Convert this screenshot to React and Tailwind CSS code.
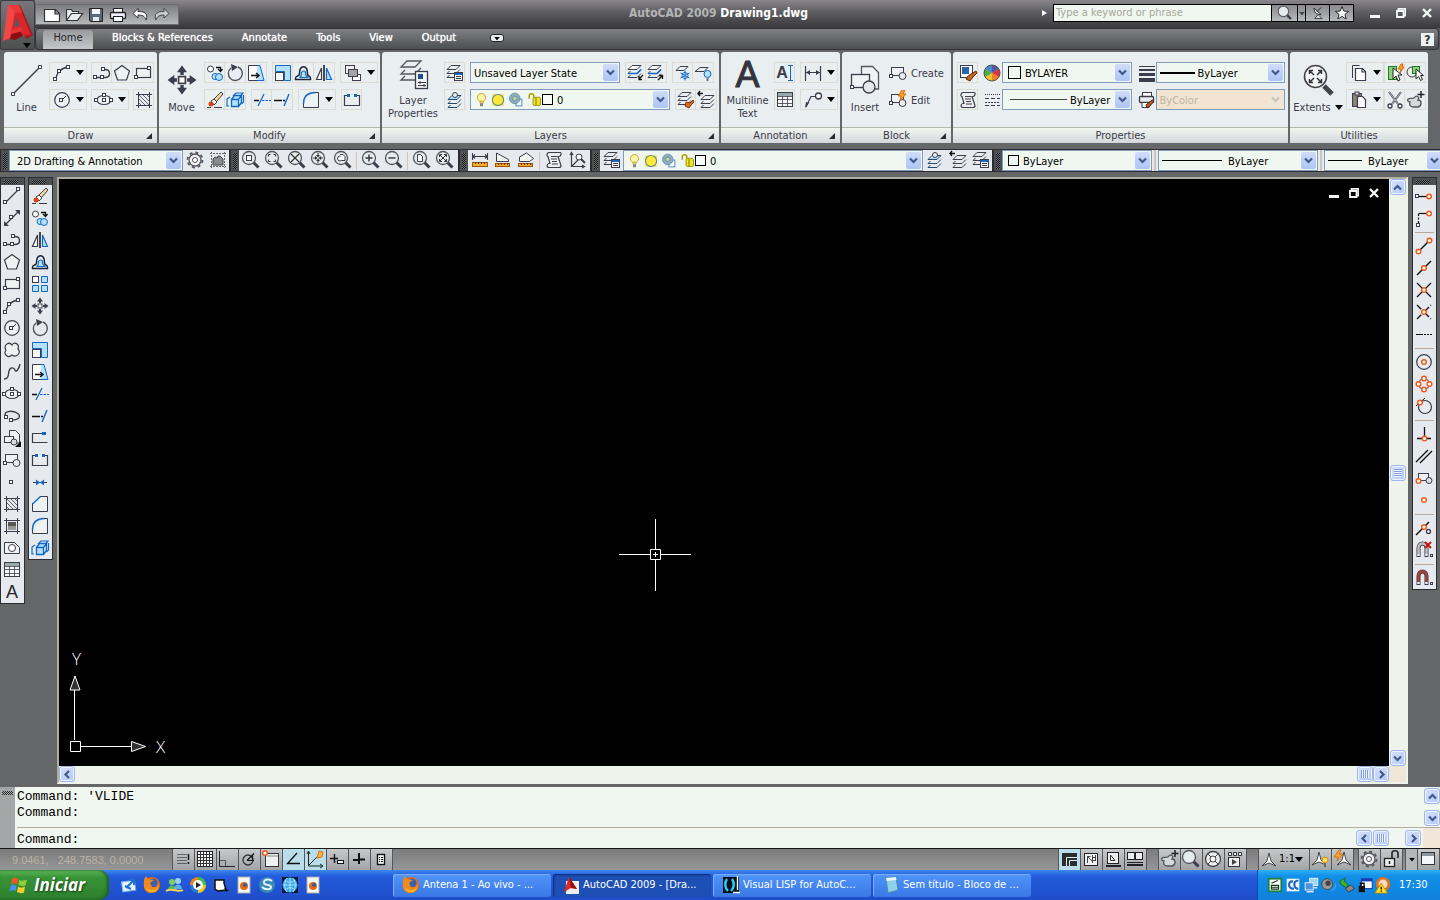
import React from "react";

const D = "#3c3c4a";
const B = "#1268c4";
const L = "#b4e0fa";
const OR = "#f05a1e";

const P = ({ d, c = D, f = "none", w = 1, ...r }) => (
  <path d={d} stroke={c} fill={f} strokeWidth={w} {...r} />
);
const N = ({ x, y }) => <rect x={x - 0.5} y={y - 0.5} width="3" height="3" fill="#fff" stroke={D} />;
const O = ({ x, y }) => <circle cx={x} cy={y} r="2.300" fill="#fff" stroke={OR} strokeWidth="1.5" />;
const Lens = ({ children }) => (
  <>
    <P d="M12 12l5.500 5.500" w={3} />
    <circle cx="8" cy="8" r="6.500" fill="#e4ecee" stroke="#55555f" strokeWidth="1.3" />
    {children}
  </>
);
const Stack = ({ x = 0, y = 0, top = "none", c = D }) => (
  <g transform={`translate(${x} ${y})`}>
    <P d="M6 2.500h9l-4 4H2z" c={c} f={top} />
    <P d="M4.500 8l-2.500 2.500h9l4-4" c={c} />
    <P d="M4.500 12l-2.500 2.500h9l4-4" c={c} />
  </g>
);
const Tripod = ({ x = 0 }) => (
  <P d={`M${x + 10} 3l2 8 5 5-7-3-7 3 5-5z`} f="#fff" c="#444" />
);
const Magnet = ({ c }) => (
  <>
    <P d="M4.500 17V8c0-6 8-6 8 0v9" c={D} w={4} />
    <P d="M4.500 14V8c0-6 8-6 8 0v6" c={c} w={2.5} />
    <P d="M4.500 14v2M12.500 14v2" c="#eee" w={2.5} />
    <rect x="16.500" y="14.500" width="2" height="2" fill="none" stroke={D} />
  </>
);
const Block = () => (
  <>
    <rect x="3.500" y="4.500" width="12" height="8" fill="#eef2f4" stroke={D} />
    <circle cx="14.500" cy="13" r="3.500" fill="#e8ecee" stroke={D} />
    <N x={2} y={12} />
  </>
);

const ICONS = {
  line: <><P d="M4 16L17 3" w={1.3} /><N x={2} y={15} /><N x={15} y={2} /></>,
  xline: <><P d="M3 17L17 3" w={1.2} /><path d="M2 18v-5l5 5zM18 2v5l-5-5z" fill={D} /><N x={8} y={8} /></>,
  pline: <><P d="M4 14.500h9c6 0 6-8 0-8" w={1.4} /><N x={2} y={13} /><N x={9} y={13} /><N x={10} y={5} /></>,
  polygon: <P d="M10 2.500l7.500 5.500-3 9h-9l-3-9z" f="#edf2f2" w={1.2} />,
  rect: <><rect x="3.500" y="5.500" width="14" height="9" fill="#edf2f2" stroke={D} strokeWidth="1.200" /><N x={2} y={13} /><N x={15} y={4} /></>,
  arc: <><P d="M4 17C4 10 9 5 16 4" w={1.3} /><N x={2} y={15} /><N x={6} y={7} /><N x={15} y={3} /></>,
  circle: <><circle cx="10" cy="10" r="7.300" fill="#edf2f2" stroke={D} strokeWidth="1.200" /><P d="M10 10l4-4" /><N x={8} y={9} /></>,
  revcloud: <P d="M10 5c2-4 8-1 6 4 4 4-2 9-6 6-4 4-9-1-6-5-3-5 3-9 6-5z" f="#edf2f2" w={1.2} />,
  spline: <P d="M2 17c5 0 4-4 5-8s5-4 6-1 4-1 5-6" w={1.4} />,
  ellipse: <><ellipse cx="10" cy="10" rx="7" ry="4.500" fill="#edf2f2" stroke={D} strokeWidth="1.200" /><N x={1} y={9} /><N x={9} y={9} /><N x={16} y={9} /><N x={9} y={4} /></>,
  ellipsearc: <><P d="M4 11C0 5 10 4 15 7s2 7-5 7" w={1.4} /><N x={3} y={10} /><N x={8} y={13} /></>,
  insert: <><P d="M7.500 9V2.500h6l4 4V15h-6" f="#eef2f4" /><rect x="2.500" y="8.500" width="9" height="6" fill="#eef2f4" stroke={D} /><circle cx="12" cy="14" r="3" fill="#ddd" stroke={D} /><path d="M19 13v6h-6z" fill="#111" /></>,
  block: <Block />,
  point: <N x={8} y={9} />,
  hatch: <><P d="M2 4.500h16M2 15.500h16M4.500 2v16M15.500 2v16" /><P d="M5 5l10 10M5 9l6 6M9 5l6 6M5 13l2 2M13 5l2 2" w={0.8} /></>,
  gradient: <><P d="M2 4.500h16M2 15.500h16M4.500 2v16M15.500 2v16" /><rect x="6" y="6" width="8" height="8" fill="#999" /><rect x="6" y="6" width="8" height="4" fill="#555" /></>,
  region: <><P d="M2.500 15.500v-11h10l5 5v6z" f="#edf2f2" /><circle cx="10" cy="10" r="3.500" fill="#fff" stroke={D} /></>,
  table: <><rect x="2.500" y="2.500" width="15" height="14" fill="#f6f8f8" stroke={D} /><rect x="3" y="3" width="14" height="3" fill="#9aa" /><P d="M3 6.500h14M3 9.500h14M3 13.500h14M7.500 6v10M12.500 6v10" w={0.8} /></>,
  erase: <><path d="M9 9l7-7 2 2-7 8z" fill="#fbd79a" stroke={D} /><path d="M6 11l3-2 3 3-3 3z" fill="#fff" stroke={D} /><circle cx="6" cy="14" r="2.500" fill="#d84315" /><P d="M2 17.500h4M9 17.500h8" /></>,
  copy: <><circle cx="5.500" cy="6" r="3" fill="#fff" stroke={D} /><circle cx="10" cy="13.500" r="3" fill={L} stroke={B} /><circle cx="14" cy="14" r="3.500" fill={L} stroke={B} /><P d="M11 4.500h4.500v4M13 6l2.500 2.500 2-2.500" w={1.3} c="#111" /></>,
  mirror: <><P d="M7.500 5v11.500h-5z" f="#fff" w={1.2} /><P d="M12.500 5v11.500h5z" c={B} f={L} w={1.2} /><P d="M10 2v16" w={1.5} c="#111" /></>,
  offset: <><P d="M2.500 15.500c0-4 4-1 4-5 0-9 8-9 8 0 0 4 3 1 3 5v1h-15z" c="#16243c" w={1.5} /><P d="M6.500 14.500c3-1 1-3 2-5s4-2 4 0 0 4 3 5z" c={B} f={L} w={1.2} /></>,
  array: <><rect x="2.500" y="2.500" width="6" height="6" fill="#fff" stroke={D} /><P d="M11.500 2.500h6v6h-6zM11.500 11.500h6v6h-6zM2.500 11.500h6v6h-6z" c={B} f={L} /></>,
  move: <><rect x="8" y="8" width="4" height="4" fill="#fff" stroke={D} /><path d="M10 1.500l3 4h-2V7H9V5.500H7zM10 18.500l3-4h-2V13H9v1.500H7zM1.500 10l4-3v2H7v2H5.500v2zM18.500 10l-4-3v2H13v2h1.500v2z" fill={D} /></>,
  rotate: <><P d="M6 5a7 7 0 1 0 7-1" w={1.4} c="#55555f" /><path d="M6 1l7 3-6 4z" fill={D} /></>,
  scale: <><P d="M2.500 2.500h15v15h-6v-9h-9z" c={B} f={L} /><rect x="2.500" y="9.500" width="8" height="8" fill="#f8fafa" stroke={D} /></>,
  stretch: <><P d="M11 2.500H2.500v15H11" f="#fff" /><P d="M11 2.500h3l4 15h-7" c={B} f={L} /><P d="M5 12.500h7M10 10l3 2.500-3 2.500" w={1.4} c="#111" /></>,
  trim: <><P d="M2 10.500h5" w={1.5} c="#111" /><P d="M6 16l6-12" c={B} w={1.3} /><P d="M10 10.500h9" c={B} strokeDasharray="2.500 1" w={1.2} /></>,
  extend: <><P d="M2 10.500h6" w={1.5} c="#111" /><P d="M8 10.500h5" c="#111" strokeDasharray="2 1" w={1.3} /><P d="M12 16l5-12" c={B} w={1.4} /></>,
  breakpt: <><P d="M12 5.500H2.500v9h15" w={1.2} /><rect x="12" y="4" width="4" height="3" fill={B} /></>,
  break: <><P d="M5 5.500H2.500v10h15v-10H15" w={1.2} /><rect x="5" y="4" width="3" height="3" fill={B} /><rect x="12" y="4" width="3" height="3" fill={B} /></>,
  join: <><P d="M3 10.500h14" /><path d="M6 7.500l4 3-4 3zM14 7.500l-4 3 4 3z" fill={B} /></>,
  chamfer: <><P d="M2.500 9v8.500h15v-15H10" f="#edf2f2" /><P d="M2.500 10l8-7.500" c={B} w={1.4} /></>,
  fillet: <><P d="M2.500 13v4.500h15v-15H14" f="#edf2f2" /><P d="M2.500 14c0-7 4-11.500 12-11.500" c={B} w={1.4} /></>,
  explode: <><P d="M6.500 9.500h7v7h-7zM6.500 9.500l3-4h7l-3 4M16.500 5.500v7l-3 4" c={B} f={L} w={1.3} /><P d="M5 7l-3 2v7h2M8 6l3-3h7l-2 2M18.500 5v7l-2 2" c={B} f="none" w={1.2} /></>,
  draworder: <><rect x="2.500" y="2.500" width="9" height="8" fill="#eee" stroke={D} /><rect x="9.500" y="11.500" width="8" height="6" fill="#fff" stroke={D} /><rect x="5.500" y="6.500" width="9" height="7" fill="#a2a4a8" stroke={D} /></>,
  layerlist: <><Stack /><rect x="9.500" y="9.500" width="8" height="8" fill="#fff" stroke={D} /><P d="M10 11h7" c={B} w={2} /><P d="M11 13.500h5M11 15.500h5" /></>,
  layercur: <><Stack y={3} x={1} top={L} c="#23466e" /><circle cx="10" cy="5" r="2.500" fill="#eee" stroke={D} /></>,
  layerin: <><Stack top="#fff" /><P d="M2 10.500h9l4-4" c={B} w={1.6} /><P d="M17 12l-4 4M13 13v3.500h3" w={1.3} c="#111" /></>,
  layerout: <><Stack top="#fff" /><P d="M2 10.500h9l4-4" c={B} w={1.6} /><P d="M12 17l4-4M13 12.500h3.500V16" w={1.3} c="#111" /></>,
  layerfreeze: <><P d="M7 3.500h8l-4 4H3z" /><circle cx="12" cy="12.500" r="3" fill="#fff" stroke={B} /><P d="M12 7.500v10M7.500 10l9 5M16.500 10l-9 5" c={B} /></>,
  layeroff: <><P d="M7 4.500h8l-4 4H2z" /><circle cx="14.500" cy="11" r="3.500" fill={L} stroke={B} /><P d="M14.500 15v3" w={2} c="#678" /></>,
  layermatch: <><Stack /><path d="M10 12l4 1 3-3 1 2-3 3-2 3-4-2z" fill="#d8691c" stroke="#7a3a10" /></>,
  layerprev: <><Stack x={3} y={3} /><P d="M7 3.500H2M4 1L2 3.500 4 6" w={1.4} c="#111" /></>,
  bulb: <><circle cx="10" cy="7.500" r="5.500" fill="#fff7a8" stroke="#c8a032" strokeWidth="1.300" /><path d="M8 12h4v3H8z" fill="#f4d860" stroke="#c8a032" /><rect x="8" y="15" width="4" height="4" fill="#888" /></>,
  sun: <><rect x="2" y="2" width="16" height="16" fill="#f5d83a" /><circle cx="10" cy="10" r="8" fill="#ffe838" stroke="#5a8a90" strokeWidth="1.500" /></>,
  freeze: <><rect x="10.500" y="9.500" width="8" height="9" fill="#f4fbf4" stroke="#5a8ac8" strokeWidth="1.300" /><circle cx="9" cy="8.500" r="7" fill="#8ab0bc" stroke="#5580b0" /><circle cx="9" cy="8.500" r="3" fill="#c8d890" stroke="#5580b0" /></>,
  lock: <><P d="M3 9V5c0-3.500 6-3.500 6 0v4" c="#a8a000" w={2} /><rect x="8" y="7" width="10" height="11" rx="2" fill="#f0e428" stroke="#857c00" /><P d="M12 7.500v10" c="#a8a000" w={2} /></>,
  dim: <><P d="M2.500 3v15M17.500 3v15M3 9.500h14" w={1.2} /><path d="M3 9.500l4-2.500v5zM17 9.500L13 7v5z" fill={D} /></>,
  leader: <><circle cx="15.500" cy="6" r="3" fill="#fff" stroke={D} strokeWidth="1.300" /><P d="M12 6.500H8L3 17" w={1.2} /><path d="M2 18l1-6 3 1z" fill={D} /></>,
  edit: <><Block /><path d="M14 0l-4 6h3l-1 5 6-7h-3l2-4z" fill="#f8a02c" stroke="#d86c10" /></>,
  match: <><rect x="2.500" y="2.500" width="12" height="12" fill="#fff" stroke={D} /><rect x="4" y="4" width="7" height="7" fill="#2a64ac" /><path d="M9 14l4-3 5-3 1 2-4 4-3 4-4-2z" fill="#c8641e" stroke="#5c2c0c" /></>,
  wheel: <><circle cx="10" cy="10" r="8" fill="#e8c030" /><path d="M10 10V2a8 8 0 0 1 7 4z" fill="#5a54a8" /><path d="M10 10V2a8 8 0 0 0-7 4z" fill="#488ad0" /><path d="M10 10l7-4a8 8 0 0 1 0 8z" fill="#d8344c" /><path d="M10 10L3 6a8 8 0 0 0 0 8z" fill="#4cae50" /><path d="M10 10l7 4a8 8 0 0 1-7 4z" fill="#f08028" /><circle cx="10" cy="10" r="8" fill="none" stroke="#555" /></>,
  list: <><P d="M5 2.500h11c2 0 1 4-1 4h-1l3 9c0 2-2 2-2 2H5c-3 0-2-4 0-4h1l-2-7c-2 0-1-4 1-4z" f="#eee" w={1.2} /><P d="M7 6.500h6M7 9h6M8 11.500h5M8 14h6" /></>,
  ltypes: <><P d="M3 4.500h15" strokeDasharray="1 1" /><P d="M3 8.500h15M3 15.500h15" strokeDasharray="4 2" /><P d="M3 12.500h15" strokeDasharray="2 1" /></>,
  lweights: <><P d="M3 3.500h16" /><P d="M3 7h16" w={2} /><P d="M3 11.500h16" w={3} /><P d="M3 17h16" w={4} /></>,
  plot: <><rect x="6.500" y="2.500" width="9" height="5" fill="#fff" stroke={D} /><rect x="3.500" y="6.500" width="14" height="6" rx="1" fill="#e8ecee" stroke={D} strokeWidth="1.300" /><P d="M6 12.500h8l-1 5H6z" f="#fff" /><path d="M10 15l6-5 2 1-4 5-3 2z" fill="#b85a22" stroke="#4c240c" /></>,
  copyclip: <><P d="M3.500 15V2.500h7" /><P d="M6.500 5.500h7l3 3v9h-10zM13 6v3h3" f="#fff" w={1.2} /></>,
  paste: <><rect x="3.500" y="3.500" width="9" height="13" fill="#8c8078" stroke={D} /><rect x="6" y="2" width="4" height="3" fill="#ddd" stroke={D} /><P d="M8.500 6.500h5l3 3v8h-8z" f="#fff" w={1.2} /></>,
  qselect: <><rect x="3.500" y="3.500" width="8" height="13" fill="#8fd07c" stroke="#1e7a1e" /><path d="M8 5v11l3-3 2 5 2-1-2-5h4z" fill="#fff" stroke="#222" /><path d="M16 1l-3 5h3l-1 4 4-6h-2l1-3z" fill="#f8a02c" stroke="#d86c10" /></>,
  select: <><circle cx="7" cy="9" r="5" fill="#eee" stroke={D} /><rect x="7.500" y="3.500" width="7" height="7" fill="#8fd07c" stroke="#1e7a1e" /><path d="M11 6v10l2.500-2.500 2 4 2-1-2-4h3z" fill="#fff" stroke="#222" /></>,
  cut: <><P d="M4 2l9 12M16 2L7 14" w={2} /><P d="M4 2l9 12M16 2L7 14" w={0.7} c="#eee" /><circle cx="5" cy="16" r="2" fill="#fff" stroke={D} strokeWidth="1.300" /><circle cx="15" cy="16" r="2" fill="#fff" stroke={D} strokeWidth="1.300" /></>,
  pan: <><P d="M3 9c3-2 5 1 7-2 2-2 5 0 3 3 4 0 4 6 0 7H8c-3 0-4-3-3-5-2 0-3-2-2-3z" f="#d4d8da" c="#555" w={1.3} /><P d="M16 1v7M12.500 4.500h7" w={1.5} c="#222" /></>,
  gear: <><circle cx="10" cy="10" r="6" fill="#f4f4f4" stroke="#55555f" strokeWidth="1.300" /><circle cx="10" cy="10" r="7.500" fill="none" stroke="#55555f" strokeWidth="1.800" strokeDasharray="3 2.900" /><circle cx="10" cy="10" r="2.500" fill="#fff" stroke="#55555f" /></>,
  custom: <><P d="M2 3.500h16M2 16.500h16M3.500 2v16M16.500 2v16" c="#666" strokeDasharray="2 1" /><path d="M5 15V9l2-2 2 1 1-2h2l3 3v6z" fill="#8a8a92" stroke="#444" /></>,
  zwin: <Lens><rect x="5.500" y="5.500" width="5" height="5" fill="#fff" stroke={D} /></Lens>,
  zdyn: <Lens><P d="M4.500 6.500v-2h2M9.500 4.500h2v2M11.500 9.500v2h-2M6.500 11.500h-2v-2" c="#333" /></Lens>,
  zscale: <Lens><P d="M4 4l8 8M12 4l-8 8" c="#333" w={1.2} /></Lens>,
  zcenter: <Lens><path d="M8 7.500L6 5h4zM8 8.500L6 11h4zM7.500 8L5 6v4zM8.500 8L11 6v4z" fill="#333" /><P d="M8 3v3M8 10v3M3 8h3M10 8h3" c="#333" /></Lens>,
  zobj: <Lens><circle cx="7" cy="8.500" r="2.500" fill="#fff" stroke={D} /><P d="M7 4.500h3l2 2v4h-3" f="#fff" /></Lens>,
  zin: <Lens><P d="M4.500 8h7M8 4.500v7" c="#333" w={1.4} /></Lens>,
  zout: <Lens><P d="M4.500 8h7" c="#333" w={1.4} /></Lens>,
  zall: <Lens><P d="M5.500 4.500h3l2 2v5h-5z" f="#fff" /></Lens>,
  zext: <Lens><P d="M5 5l6 6M11 5l-6 6M4.500 7V4.500H7M9 4.500h2.500V7M11.500 9v2.500H9M7 11.500H4.500V9" c="#333" /></Lens>,
  zplain: <Lens />,
  dist: <><P d="M2.500 3v7M17.500 3v7M3 6.500h14M5 4.500L3 6.500l2 2M15 4.500l2 2-2 2" w={1.1} /><rect x="2.500" y="12.500" width="15" height="4" fill="#f4ac28" stroke="#9c5406" /><P d="M5.500 12v2M8.500 12v2M11.500 12v2M14.500 12v2" c="#6a3400" /></>,
  area: <><P d="M3.500 11.500V3l12 6.500v2z" f="#f4f6f4" /><rect x="2.500" y="13.500" width="14" height="3" fill="#f4ac28" stroke="#9c5406" /><P d="M5.500 13v2M8.500 13v2M11.500 13v2M14.500 13v2" c="#6a3400" /></>,
  volume: <><P d="M3.500 11.500V7l7-4 7 5.500-4 3z" f="#f4f6f4" /><rect x="2.500" y="13.500" width="14" height="3" fill="#f4ac28" stroke="#9c5406" /><P d="M5.500 13v2M8.500 13v2M11.500 13v2M14.500 13v2" c="#6a3400" /></>,
  locate: <><P d="M4.500 3v13.500H17M3 5l1.500-2.500L6 5M15 15l2.500 1.500L15 18M5 16l6-6" w={1.2} /><circle cx="12" cy="7" r="3" fill="#fff" stroke={D} /><P d="M14 9l4 4" w={2} /></>,
  otrack: <><P d="M5 10.500h10" c="#111" w={1.3} /><N x={2} y={9} /><O x={15} y={10.500} /></>,
  ofrom: <><P d="M4.500 5.500H14" c="#111" w={1.2} /><P d="M4.500 6v9" c="#111" strokeDasharray="2 1.500" w={1.2} /><N x={3} y={16} /><O x={15} y={5.500} /></>,
  oend: <><P d="M5 15L15 5" w={1.4} c="#111" /><O x={4.500} y={15.500} /><O x={15.500} y={4.500} /></>,
  omid: <><P d="M3 17L17 3" w={1.4} c="#111" /><O x={10} y={10} /></>,
  oint: <><P d="M3 17L17 3M3 3l14 14" w={1.3} c="#111" /><O x={10} y={10} /></>,
  oapp: <><P d="M3 17L17 3M3 3l14 14" w={1.3} c="#111" strokeDasharray="6 2 1 2" /><O x={10} y={10} /></>,
  oext: <P d="M2 10.500h16" c="#111" w={1.2} strokeDasharray="7 1 2 1 2 1 2 1" />,
  ocen: <><circle cx="10" cy="10" r="7.300" fill="#e8ecee" stroke={D} strokeWidth="1.200" /><O x={10} y={10} /></>,
  oquad: <><circle cx="10" cy="10" r="5.500" fill="#e8ecee" stroke={D} /><O x={10} y={4.500} /><O x={10} y={15.500} /><O x={4.500} y={10} /><O x={15.500} y={10} /></>,
  otan: <><circle cx="11" cy="11" r="6.500" fill="#e8ecee" stroke={D} strokeWidth="1.200" /><P d="M2 10l9-8" c="#111" /><O x={6} y={6.500} /></>,
  operp: <><P d="M10.500 3v11M3 14.500h14" w={1.3} c="#111" /><O x={10.500} y={14.500} /></>,
  opar: <P d="M2 16L14 4M6 17L18 5" w={1.4} c="#111" />,
  oins: <><rect x="4.500" y="5.500" width="10" height="7" fill="#eef2f4" stroke={D} /><circle cx="15" cy="12.500" r="3" fill="#ddd" stroke={D} /><O x={4.500} y={13} /></>,
  onode: <O x={10} y={10} />,
  onear: <><P d="M2 17L15 4" w={1.4} c="#111" /><O x={10} y={9} /><circle cx="14.500" cy="13.500" r="2" fill="#fff" stroke={D} strokeWidth="1.300" /></>,
  onone: <><Magnet c="#c0c0c0" /><P d="M11 2l6 6M17 2l-6 6" c="#c81414" w={2} /></>,
  oset: <Magnet c="#a8403a" />,
  fnew: <P d="M2.500 4.500h11l4 4v8h-15zM13 5v4h4" f="#fff" c="#333" w={1.2} />,
  fopen: <P d="M2.500 15.500v-11h5l1 2h6v2M2.500 15.500l5-7h11l-5 7z" f="#e8ecee" c="#333" w={1.2} />,
  fsave: <><path d="M3.500 3.500h13v13h-12l-1-1z" fill="#5a6874" stroke="#222" /><rect x="6" y="4" width="8" height="5" fill="#f4f8fa" /><rect x="7" y="12" width="6" height="4" fill="#e8ecee" /></>,
  fprint: <><rect x="5.500" y="3.500" width="9" height="5" fill="#fff" stroke="#222" /><rect x="2.500" y="7.500" width="15" height="6" rx="1" fill="#eef" stroke="#222" strokeWidth="1.300" /><rect x="5.500" y="11.500" width="9" height="5" fill="#fff" stroke="#222" /></>,
  undo: <P d="M8 3.500L3 8.500l5 4.500v-3c4 0 7 1 8 5 3-6-2-9-8-8.500z" f="#fff" c="#333" />,
  redo: <P d="M12 3.500l5 5-5 4.500v-3c-4 0-7 1-8 5-3-6 2-9 8-8.500z" f="#c8cccc" c="#444" />,
  dish: <><P d="M5 4c0 5 3 8 9 8zM9 8l5-5" f="#eee" c="#222" w={1.2} /><P d="M10 12l-4 5h9z" f="#ddd" c="#222" /></>,
  star: <P d="M10 2l2.300 5.500 6 .5-4.600 3.800 1.500 5.700L10 14.300l-5.200 3.200 1.500-5.700L1.700 8l6-.5z" f="#f4f8f4" c="#222" w={1.2} />,
  snap: <><P d="M4.500 5.500h9M4.500 8.500h9M4.500 11.500h9M4.500 14.500h9" c="#111" strokeDasharray="1 1" /><P d="M15.500 5v6M15.500 13v2" c="#111" w={1.4} /></>,
  grid: <><rect x="2.500" y="2.500" width="15" height="15" fill="#fff" stroke="#222" /><P d="M5.500 3v14M8.500 3v14M11.500 3v14M14.500 3v14M3 5.500h14M3 8.500h14M3 11.500h14M3 14.500h14" c="#333" /></>,
  ortho: <><P d="M2.500 2v15.500H18" c="#222" /><P d="M3 11.500h5.500V17" c="#555" /></>,
  polar: <><circle cx="9" cy="11" r="5" fill="none" stroke="#333" strokeWidth="1.300" /><P d="M8 11.500h7M8 11.500l7-7M13.500 6v5" c="#111" w={1.2} /></>,
  osnap: <><rect x="4.500" y="4.500" width="13" height="13" fill="#f0f0f0" stroke="#333" /><P d="M6 7h11" c="#bbb" w={2} /><O x={4} y={4} /></>,
  otk: <P d="M14 4L4.500 14.500H17" c="#111" w={1.3} />,
  ducs: <><P d="M3.500 3v14H18M4 16L12 8M2 5l1.500-3L5 5M15 15l3 2-3 2" c="#222" /><path d="M14 2l-2 7 5-1 1-5z" fill="#f8b040" stroke="#e07010" /></>,
  dyn: <><P d="M3 9.500h8M7.500 5v9" c="#111" w={1.4} /><rect x="10.500" y="11.500" width="6" height="3" fill="#fff" stroke="#111" /></>,
  lwt: <><P d="M4 11h6" c="#111" w={2} /><P d="M10 10.500h6M10 4v11" c="#111" w={2} /></>,
  qp: <><rect x="6.500" y="5.500" width="7" height="10" fill="#fff" stroke="#111" strokeWidth="1.400" /><P d="M8 8.500h4M8 10.500h4M8 12.500h4" c="#111" strokeDasharray="1 1 2" /></>,
  model: <><rect x="3" y="4" width="15" height="13" fill="#2a2e30" /><P d="M7.500 17V8.500H18M10.500 17v-5.500H18" c="#dfeef4" /></>,
  layout: <><rect x="3.500" y="4.500" width="13" height="12" fill="#f0f0f0" stroke="#222" /><P d="M6 7l5 5M6.500 14V7.500h3M11.500 6v8M11 8.500h4M11 11.500h4M14.500 6v6" c="#444" /></>,
  lay2: <><rect x="4.500" y="3.500" width="11" height="11" fill="#eee" stroke="#222" /><P d="M7.500 6v5.500H12z" c="#333" /><P d="M3 17h15" c="#222" w={2} /></>,
  quick: <><rect x="2.500" y="3.500" width="7" height="7" fill="#eee" stroke="#222" /><rect x="10.500" y="3.500" width="7" height="7" fill="#eee" stroke="#222" /><P d="M2 13.500h16" c="#222" w={1} /><P d="M2 16h16" c="#222" w={2} /></>,
  swheel: <><circle cx="10" cy="10" r="7.500" fill="#eee" stroke="#444" strokeWidth="1.300" /><circle cx="10" cy="10" r="3" fill="#fff" stroke="#444" /><P d="M5 5l3 3M15 5l-3 3M5 15l3-3M15 15l-3-3" c="#444" /></>,
  motion: <><P d="M3.500 3.500h3v3h-3zM8.500 3.500h3v3h-3zM13.500 3.500h3v3h-3z" f="#eee" c="#333" /><rect x="3.500" y="8.500" width="11" height="9" fill="#eee" stroke="#333" /><path d="M7 10v6l5-3z" fill="#444" /></>,
  tripod: <Tripod />,
  annvis: <><Tripod x={-1} /><circle cx="15" cy="11" r="3" fill="#ffe060" stroke="#e08a10" /><P d="M15 14v4" w={2} c="#666" /></>,
  annauto: <><Tripod x={2} /><path d="M7 1L2 8h4l-1 4 6-7H7l2-4z" fill="#f8a830" stroke="#d86c10" /></>,
  unlock: <><rect x="3.500" y="9.500" width="10" height="8" fill="#eee" stroke="#222" strokeWidth="1.300" /><P d="M8.500 12v3" c="#222" w={1.5} /><P d="M11 9V4c0-3 6-3 6 0v5" c="#222" w={1.6} /></>,
  clean: <><rect x="3.500" y="3.500" width="13" height="12" fill="#f4f8f8" stroke="#333" /><rect x="4" y="4" width="12" height="3" fill="#8a98a0" /></>,
  desktop: <><rect x="3" y="6" width="13" height="10" fill="#e8f2fc" stroke="#7ab0e8" transform="rotate(-8 10 10)" /><P d="M7 13l7-7M10 5l5 0v5M12 14l-6-3" c="#1c70d0" w={2} /></>,
  firefox: <><circle cx="10" cy="10" r="8" fill="#e86a10" /><circle cx="11" cy="8" r="4.500" fill="#3a60b0" /><path d="M2 7c0-3 1-5 2-6l2 3 6 1-4 3 2 4c4 1 6-1 7-4 1 6-3 10-8 10S1 14 2 7z" fill="#f48a1c" /><path d="M4 12c3 5 9 4 12 1-2 5-10 6-12-1z" fill="#fcc828" /></>,
  msn: <><circle cx="7" cy="7" r="3" fill="#7cd060" /><path d="M3 15c0-6 8-6 8 0z" fill="#58b848" /><circle cx="13" cy="6" r="3" fill="#9ad4f4" /><path d="M9 14c0-6 8-6 8 0z" fill="#5cb0e4" /><P d="M1 16c6-4 12 2 17-1" c="#f4d060" w={2} /></>,
  wmp: <><circle cx="10" cy="10" r="8" fill="#2878d8" /><path d="M10 10V2a8 8 0 0 1 8 8z" fill="#48b848" /><path d="M10 10H2a8 8 0 0 1 8-8z" fill="#f08020" /><path d="M10 10h8a8 8 0 0 1-8 8z" fill="#f4c820" /><circle cx="10" cy="10" r="5" fill="#f4f8fc" /><path d="M8 7v6l5-3z" fill="#222" /></>,
  dark: <><path d="M4 5h9v3l2 7-8 1-3-2z" fill="#fff" stroke="#111" strokeWidth="1.500" /><path d="M13 13l5 2-3 2z" fill="#111" /></>,
  htmldoc: <><rect x="4" y="2" width="12" height="16" fill="#f8f8f8" stroke="#aaa" /><circle cx="10" cy="11" r="4" fill="#e86a10" /><circle cx="11" cy="10" r="2" fill="#3858a8" /></>,
  sball: <><circle cx="10" cy="10" r="8" fill="#3888b8" /><P d="M15 6c-4-3-9-1-8 2s7 1 7 4-6 3-9 0" c="#e4f4fc" w={2} /></>,
  globe: <><rect x="2" y="2" width="16" height="16" fill="#0a1840" /><circle cx="10" cy="10" r="7.500" fill="#38a8e8" /><P d="M3 10h14M10 3v14M5 5c3 3 7 3 10 0M5 15c3-3 7-3 10 0M7 3c-3 4-3 10 0 14M13 3c3 4 3 10 0 14" c="#c8f0fc" w={0.8} /></>,
  acad: <><rect x="5" y="6" width="13" height="13" fill="#eceef0" /><path d="M8 2l8 12-6-1-7 4z" fill="#e02828" /><path d="M8 2l8 12-6-1z" fill="#9c1010" /></>,
  vlisp: <><rect x="2" y="2" width="16" height="16" fill="#04101c" /><P d="M6 4c-3 4-2 9 1 12M11 4c3 4 2 9-1 12" c="#28d0f4" w={2.4} /><P d="M16.500 1v14M12 17.500h7" c="#fff" w={1.4} /></>,
  notepad: <><path d="M5 3l10-1 2 13-10 3z" fill="#8cd0ec" stroke="#4c8cac" /><path d="M5 3l10-1 .5 3L5.500 6z" fill="#e8f4f8" /></>,
  tray1: <><rect x="3" y="3" width="14" height="14" fill="#fff" stroke="#188040" strokeWidth="2" /><P d="M6 8l7-3M6 10.500h8v4H6zM6 12.500h8" c="#103818" w={1.3} /></>,
  tray2: <><rect x="3" y="3" width="14" height="14" fill="#f0f8ff" /><P d="M10 6c-6-1-6 9 1 8M16 5c-7 0-5 10 0 9" c="#2464b8" w={2.4} /></>,
  tray3: <><rect x="8.500" y="2.500" width="9" height="8" fill="#9cd4fc" stroke="#e8f4ff" /><rect x="3.500" y="7.500" width="9" height="8" fill="#4c94e0" stroke="#e8f4ff" /><P d="M5 17.500h8M13 13h4" c="#dde" w={1.5} /></>,
  tray4: <><circle cx="8" cy="9" r="6" fill="#9a9a98" stroke="#444" /><circle cx="9" cy="8" r="3" fill="#444" /><P d="M15 15c2-2 3-4 2-6M12 17c2-1 3-2 3-3" c="#60a8f8" /></>,
  tray5: <><path d="M2 6l6-4-1 4 4 3-1 4-6-3z" fill="#3cb030" stroke="#186818" /><path d="M8 14l6-4 4 4-6 4z" fill="#888" stroke="#333" /></>,
  tray6: <><rect x="6" y="3" width="12" height="11" fill="#fff" stroke="#1030a0" /><rect x="6" y="3" width="12" height="3" fill="#1838b8" /><rect x="3" y="11" width="7" height="7" fill="#111" /><P d="M5 11V8h4v3" c="#111" w={1.5} /></>,
  tray7: <><circle cx="10" cy="9" r="8" fill="#e8701c" /><circle cx="10" cy="9" r="5" fill="#f8dcc0" /><path d="M8 8l7 11H1z" fill="#fce020" stroke="#b89000" /><P d="M8 12v3M8 16v1.500" c="#111" w={1.5} /></>,
};

const Icon = ({ n, cls = "size-5" }) => (
  <svg viewBox="0 0 20 20" className={`${cls} shrink-0`} aria-hidden="true">{ICONS[n]}</svg>
);
const Tri = ({ cls = "text-black" }) => (
  <svg viewBox="0 0 8 5" className={`h-[5px] w-2 shrink-0 ${cls}`} aria-hidden="true"><path d="M0 0h8L4 5z" fill="currentColor" /></svg>
);

const Group = ({ items = [], dd, children }) => (
  <div className={`flex h-[21px] shrink-0 divide-x divide-[#dcdcd2] border border-[#dcdcd2] ${dd ? "w-[38px]" : ""}`}>
    {children || items.map((n) => (
      <button key={n} aria-label={n} className={`flex h-full ${dd ? "w-full gap-1 pl-[2px]" : "w-[21px] first:w-5 last:w-5 only:w-[19px]"}`}>
        <Icon n={n} />
        {dd && <span className="flex h-full items-center"><Tri /></span>}
      </button>
    ))}
  </div>
);

const Panel = ({ title, w, launcher, children }) => (
  <section className={`flex flex-col overflow-hidden rounded-t-[3px] bg-[#e9eef1] ${w}`}>
    <div className="flex h-[75px]">{children}</div>
    <div className="relative h-4 border-t border-[#b4b8ac] bg-linear-to-b from-[#f1f6f0] to-[#d3d7dc] text-center leading-[15px]">
      <h2>{title}</h2>
      {launcher && (
        <svg viewBox="0 0 6 6" className="absolute right-[5px] bottom-1 size-1.5" aria-hidden="true"><path d="M6 0v6H0z" fill="#2b2b33" /></svg>
      )}
    </div>
  </section>
);
const Big = ({ icon, w, two, children }) => (
  <button className={`flex shrink-0 flex-col items-center leading-[13px] ${two ? "gap-px pt-[5px]" : "gap-[3px] pt-2.5"} ${w}`}>
    <span className="flex h-9 items-center justify-center">{icon}</span>
    <span className="flex items-center gap-1">{children}</span>
  </button>
);
const Rows = ({ children, cls = "" }) => <div className={`flex flex-col gap-1.5 pt-2.5 ${cls}`}>{children}</div>;
const Row = ({ children, cls = "gap-[5px]" }) => <div className={`flex h-[21px] items-center ${cls}`}>{children}</div>;

const Chevron = ({ dir = "down", c = "#41598c" }) => {
  const d = { down: "M2 3.500l3.500 3.500L9 3.500", up: "M2 7.500L5.500 4 9 7.500", left: "M7 2L3.500 5.500 7 9", right: "M4 2l3.500 3.500L4 9" }[dir];
  return <svg viewBox="0 0 11 11" className="size-[11px]" aria-hidden="true"><path d={d} fill="none" stroke={c} strokeWidth="2.200" /></svg>;
};

const Combo = ({ label, value, w, pre, disabled }) => (
  <div className={`flex h-[21px] min-w-0 items-center border border-[#7f9db9] py-px pr-px pl-[3px] ${w} ${disabled ? "bg-[#f3e4d2] text-[#b9b5a2]" : "bg-[#f0f7f0] text-black"}`}>
    {pre}
    <select aria-label={label} disabled={disabled} className="h-full min-w-0 flex-1 appearance-none bg-transparent pt-[2px] opacity-100 outline-none">
      <option>{value}</option>
    </select>
    <span className={`flex h-full w-[15px] shrink-0 items-center justify-center rounded-[2px] ${disabled ? "bg-[#efe6d8]" : "bg-linear-to-b from-[#d0dcfa] to-[#adc4f4]"}`}>
      <Chevron c={disabled ? "#c9c5b6" : "#41598c"} />
    </span>
  </div>
);
const Swatch = () => <span className="mr-1 size-[11px] shrink-0 border border-black bg-[#f8fcf8]" />;
const LayerPre = () => (
  <>
    <Icon n="bulb" cls="size-[15px]" />
    <span className="mr-px ml-[2px] flex"><Icon n="sun" cls="size-[14px]" /></span>
    <span className="mr-1 ml-[2px] flex"><Icon n="freeze" cls="size-[15px]" /></span>
    <Icon n="lock" cls="size-[15px]" />
    <Swatch />
  </>
);

const DOTS = "bg-[repeating-conic-gradient(#17171b_0_25%,#6c6e70_0_50%)] bg-size-[2px_2px]";
const Grip = () => <span className={`mx-[2px] h-4 w-1 shrink-0 ${DOTS}`} />;
const Bar = ({ children, cls = "" }) => (
  <div className={`flex h-[23px] items-center border border-[#2c2c34] bg-[#4c4e50] ${cls}`}>
    <Grip />
    <div className="flex h-full min-w-0 flex-1 items-center bg-[#e6eaee]">{children}</div>
  </div>
);
const Tool = ({ n }) => (
  <button aria-label={n} className="flex h-full w-[23px] shrink-0 items-start pl-[2px]"><Icon n={n} /></button>
);
const VSep = () => <span className="mx-[2px] h-[18px] w-px shrink-0 bg-[#d9c3b6]" />;

const Scroll = ({ dir, thumb, v }) => (
  <button aria-label={dir || "thumb"} className="flex size-4 shrink-0 items-center justify-center rounded-[3px] border border-[#9db6ec] bg-linear-to-br from-[#d6e1fc] to-[#b5c9f6] shadow-[inset_0_0_0_1px_#edf3ff]">
    {thumb ? <span className={`size-2 ${v ? "bg-[repeating-linear-gradient(180deg,#84a0e0_0_1px,#eef3ff_1px_2px)]" : "bg-[repeating-linear-gradient(90deg,#84a0e0_0_1px,#eef3ff_1px_2px)]"}`} /> : <Chevron dir={dir} />}
  </button>
);

const VBar = ({ items }) => (
  <div className="flex w-[25px] shrink-0 flex-col self-start border border-[#2c2c34] bg-[#e6eaee]">
    <span className="flex h-[7px] items-center bg-[#4c4e50]"><span className={`ml-[3px] h-1 w-3.5 ${DOTS}`} /></span>
    {items.map((n, i) =>
      n === "|" ? (
        <span key={i} className="flex h-1.5 items-center px-[2px]"><span className="h-px w-full bg-[#b7a79d]" /></span>
      ) : (
        <button key={i} aria-label={n} className="flex h-[22px] items-center pl-px">
          {n === "A" ? <span className="w-5 text-center font-['Liberation_Sans',sans-serif] text-[18px] leading-none text-[#26262e]">A</span> : <Icon n={n} />}
        </button>
      )
    )}
  </div>
);

const DRAW = ["line", "xline", "pline", "polygon", "rect", "arc", "circle", "revcloud", "spline", "ellipse", "ellipsearc", "insert", "block", "point", "hatch", "gradient", "region", "table", "A"];
const MODIFY = ["erase", "copy", "mirror", "offset", "array", "move", "rotate", "scale", "stretch", "trim", "extend", "breakpt", "break", "join", "chamfer", "fillet", "explode"];
const SNAPS = ["otrack", "ofrom", "|", "oend", "omid", "oint", "oapp", "oext", "|", "ocen", "oquad", "otan", "|", "operp", "opar", "oins", "onode", "|", "onear", "onone", "|", "oset"];

const WinButtons = ({ cls }) => (
  <div className={`flex items-center text-white ${cls}`}>
    <button aria-label="Minimize"><svg viewBox="0 0 10 10" className="size-2.5"><path d="M0 7h10v3H0z" fill="#f4f8f4" /></svg></button>
    <button aria-label="Restore"><svg viewBox="0 0 10 10" className="size-2.5"><path d="M2.500 2V.8h7v6.700H8M1 3h6.500v6H1z" fill="none" stroke="#f4f8f4" strokeWidth="1.800" /></svg></button>
    <button aria-label="Close"><svg viewBox="0 0 10 10" className="size-2.5"><path d="M1 1l8 8M9 1L1 9" stroke="#f4f8f4" strokeWidth="2.400" /></svg></button>
  </div>
);

const Header = () => (
  <header className="flex bg-[#56585a]">
    <button aria-label="Application menu" className="flex h-[50px] w-[35px] shrink-0 flex-col items-center rounded-[3px] border border-[#3a3a40] bg-linear-to-b from-[#77777b] to-[#4e5050] pt-[2px]">
      <svg viewBox="0 0 32 40" className="h-10 w-8" aria-hidden="true">
        <path d="M15 2h3l13 30-7 4z" fill="#a81418" />
        <path d="M13 2h4l12 30-9 1-3-7-7 1-2 9-7 1z" fill="#d8262a" />
        <path d="M6 2h8l-2 12-4 21-7 3z" fill="#f04846" />
        <path d="M6 2h11l3 7-6 1z" fill="#e83a3a" />
        <path d="M14 14l4 9-6 1z" fill="#58585c" />
        <path d="M10 29l8-2 3 6-8 4-5-1z" fill="#8e0d12" />
        <path d="M9 27l10-3 2 4-12 3z" fill="#e63436" />
      </svg>
      <span className="self-end pr-[3px]"><Tri /></span>
    </button>
    <div className="min-w-0 flex-1">
      <div className="flex h-7 items-start bg-linear-to-b from-[#8a878c] via-[#5c5c60] via-45% to-[#3a3a3c] pt-1">
        <div className="flex h-[21px] w-36 shrink-0 items-center justify-center gap-[2px] border border-[#6c6c70] bg-linear-to-b from-[#7e7e82] to-[#b6b8ba]">
          {["fnew", "fopen", "fsave", "fprint", "undo", "redo"].map((n) => (
            <button key={n} aria-label={n}><Icon n={n} /></button>
          ))}
        </div>
        <h1 className="flex-1 pl-[216px] text-center text-[12px] leading-[19px] font-bold whitespace-nowrap text-[#b4b4b4]">
          AutoCAD 2009 <span className="text-white">Drawing1.dwg</span>
        </h1>
        <svg viewBox="0 0 5 6" className="mt-[6px] mr-[6px] h-1.5 w-[5px] shrink-0" aria-hidden="true"><path d="M0 0l5 3-5 3z" fill="#fff" /></svg>
        <div className="flex h-[18px] divide-x divide-black border border-black bg-linear-to-b from-[#8a8a8e] to-[#b8babc]">
          <input aria-label="Search" placeholder="Type a keyword or phrase" className="w-[218px] bg-[#f0f7f0] px-[2px] outline-none placeholder:text-[#a9a797]" />
          <button aria-label="Find" className="flex w-[26px] items-center justify-center"><Icon n="zplain" cls="size-4" /></button>
          <button aria-label="Search options" className="flex w-2 items-center justify-center"><Tri cls="scale-75 text-[#444]" /></button>
          <button aria-label="Communication center" className="flex w-6 items-center justify-center"><Icon n="dish" cls="size-4" /></button>
          <button aria-label="Favorites" className="flex w-[23px] items-center justify-center"><Icon n="star" cls="size-4" /></button>
        </div>
        <WinButtons cls="h-[18px] gap-4 pr-2 pl-4" />
      </div>
      <nav className="mr-px flex h-[22px] items-end rounded-[4px] border border-[#333338] bg-linear-to-b from-[#808084] via-[#666869] to-[#4b5050] pr-1 pl-[7px] text-white">
        <a href="#home" className="flex h-[19px] w-[50px] items-center justify-center rounded-t-[4px] bg-linear-to-b from-[#9a9ca0] to-[#c4c8ca] pb-[2px] text-[#26262c]">Home</a>
        <div className="flex h-full flex-1 items-center gap-[29px] pb-[2px] pl-[19px] text-shadow-[0_0_1px_#fff]">
          <a href="#blocks">Blocks &amp; References</a>
          <a href="#annotate">Annotate</a>
          <a href="#tools">Tools</a>
          <a href="#view">View</a>
          <a href="#output">Output</a>
          <button aria-label="Ribbon options" className="ml-[5px] flex h-2 w-3.5 items-center justify-center rounded-[3px] border border-[#222] bg-[#eef2ee]"><Tri cls="scale-75 text-black" /></button>
        </div>
        <button aria-label="Help" className="mb-[3px] flex size-[13px] items-center justify-center bg-[#eef2f0] text-[12px] font-bold text-[#333]">?</button>
      </nav>
    </div>
  </header>
);

const Ribbon = () => (
  <div className="flex gap-[2px] pt-[2px] pr-3 pl-1 text-[#3a3a48]">
    <Panel title="Draw" w="w-[153px]" launcher>
      <Big w="w-[45px]" icon={<svg viewBox="0 0 34 34" className="size-[34px]"><path d="M4 30L30 4" stroke={D} strokeWidth="1.400" /><path d="M1.500 29.500h3v3h-3zM28.500 2.500h3v3h-3z" fill="#fff" stroke={D} /></svg>}>Line</Big>
      <Rows>
        <Row cls="gap-1"><Group dd items={["arc"]} /><Group items={["pline", "polygon", "rect"]} /></Row>
        <Row cls="gap-1"><Group dd items={["circle"]} /><Group dd items={["ellipse"]} /><Group items={["hatch"]} /></Row>
      </Rows>
    </Panel>
    <Panel title="Modify" w="w-[221px]" launcher>
      <Big w="w-[45px]" icon={<Icon n="move" cls="size-[34px]" />}>Move</Big>
      <Rows>
        <Row><Group items={["copy", "rotate", "stretch"]} /><Group items={["scale", "offset", "mirror"]} /><Group dd items={["draworder"]} /></Row>
        <Row><Group items={["erase", "explode"]} /><Group items={["trim", "extend"]} /><Group dd items={["fillet"]} /><Group items={["break"]} /></Row>
      </Rows>
    </Panel>
    <Panel title="Layers" w="w-[337px]" launcher>
      <Big two w="w-[62px]" icon={
        <svg viewBox="0 0 34 34" className="size-[34px]">
          <path d="M11 3h14l-6 6H5zM9 12l-4 4h14l6-6M9 18l-4 4h14l6-6" fill="none" stroke="#55555f" strokeWidth="1.300" />
          <rect x="19.500" y="13.500" width="12" height="17" fill="#f4f6f6" stroke={D} strokeWidth="1.300" />
          <rect x="22" y="16" width="5" height="5" fill="#1c4c8c" /><path d="M22 24.500h8M22 27.500h8M24 23v3M28 26v3" stroke={D} />
        </svg>
      }><span>Layer<br />Properties</span></Big>
      <Rows>
        <Row>
          <Group items={["layerlist"]} />
          <Combo label="Layer state" value="Unsaved Layer State" w="w-[150px]" />
          <Group items={["layerin", "layerout"]} /><Group items={["layerfreeze", "layeroff"]} />
        </Row>
        <Row>
          <Group items={["layercur"]} />
          <Combo label="Layer" value="0" w="w-[200px]" pre={<LayerPre />} />
          <Group items={["layermatch", "layerprev"]} />
        </Row>
      </Rows>
    </Panel>
    <Panel title="Annotation" w="w-[119px]" launcher>
      <Big two w="w-[53px]" icon={<span className="font-['Liberation_Sans',sans-serif] text-[36px] leading-9 text-[#33333f] [-webkit-text-stroke:1px_#33333f]">A</span>}><span>Multiline<br />Text</span></Big>
      <Rows>
        <Row>
          <Group>
            <button aria-label="Single line text" className="flex w-[19px] items-center justify-center">
              <span className="font-['Liberation_Sans',sans-serif] text-[16px] leading-none font-bold">A</span>
              <svg viewBox="0 0 5 16" className="h-4 w-[5px]" aria-hidden="true"><path d="M0 .5h5M0 15.500h5M2.500 1v14" stroke={B} fill="none" /></svg>
            </button>
          </Group>
          <Group dd items={["dim"]} />
        </Row>
        <Row><Group items={["table"]} /><Group dd items={["leader"]} /></Row>
      </Rows>
    </Panel>
    <Panel title="Block" w="w-[109px]" launcher>
      <Big w="w-[46px]" icon={
        <svg viewBox="0 0 34 34" className="size-[34px]">
          <path d="M13.500 12V3.500h11l6 6V26h-9" fill="#f0f2f4" stroke="#55555f" strokeWidth="1.300" />
          <rect x="3.500" y="11.500" width="18" height="13" fill="#f0f2f4" stroke={D} strokeWidth="1.300" />
          <circle cx="21" cy="24" r="6" fill="#e4e8ea" stroke={D} strokeWidth="1.300" />
          <rect x="2.500" y="22.500" width="3" height="3" fill="#fff" stroke={D} />
        </svg>
      }>Insert</Big>
      <Rows>
        <Row cls=""><button className="flex items-center gap-[3px]"><Icon n="block" /><span className="pt-[3px]">Create</span></button></Row>
        <Row cls=""><button className="flex items-center gap-[3px]"><Icon n="edit" /><span className="pt-[3px]">Edit</span></button></Row>
      </Rows>
    </Panel>
    <Panel title="Properties" w="min-w-[335px] flex-1">
      <Rows cls="min-w-0 flex-1 pr-[3px] pl-1">
        <Row cls="">
          <Group items={["match"]} /><span className="ml-1 flex"><Icon n="wheel" /></span>
          <Combo label="Object color" value="BYLAYER" w="flex-1" pre={<span className="mr-1 ml-[2px] size-[13px] shrink-0 border border-black" />} />
          <span className="ml-1 flex"><Icon n="lweights" /></span>
          <Combo label="Lineweight" value="ByLayer" w="flex-1" pre={<span className="mr-[3px] h-[2px] w-[35px] shrink-0 bg-black" />} />
        </Row>
        <Row cls="">
          <Group items={["list"]} /><span className="ml-1 flex"><Icon n="ltypes" /></span>
          <Combo label="Linetype" value="ByLayer" w="flex-1" pre={<span className="mr-[3px] ml-1 h-px w-[57px] shrink-0 bg-[#444]" />} />
          <span className="ml-1 flex"><Icon n="plot" /></span>
          <Combo label="Plot style" value="ByColor" w="flex-1" disabled />
        </Row>
      </Rows>
    </Panel>
    <Panel title="Utilities" w="w-[138px]">
      <Big w="w-[56px]" icon={
        <svg viewBox="0 0 34 34" className="size-[34px]">
          <path d="M23 23l8 8" stroke="#44444c" strokeWidth="5" />
          <circle cx="14.500" cy="13.500" r="11" fill="#f4f6f6" stroke="#44444c" strokeWidth="1.600" />
          <path d="M9 8l4 4M20 8l-4 4M9 19l4-4M20 19l-4-4M8.500 11V7.500H12M17 7.500h3.500V11M20.500 16v3.500H17M12 19.500H8.500V16" fill="none" stroke="#33333b" strokeWidth="1.500" />
        </svg>
      }>Extents <Tri /></Big>
      <Rows>
        <Row cls=""><Group dd items={["copyclip"]} /><Group items={["qselect", "select"]} /></Row>
        <Row cls=""><Group dd items={["paste"]} /><Group items={["cut", "pan"]} /></Row>
      </Rows>
    </Panel>
  </div>
);

const LineCombo = ({ label, w, line }) => (
  <Combo label={label} value="ByLayer" w={w} pre={<span className={`mr-1.5 h-px shrink-0 bg-black ${line}`} />} />
);

const Toolbars = () => (
  <div className="mt-1.5 flex overflow-hidden">
    <Bar cls="w-[230px] shrink-0"><Combo label="Workspace" value="2D Drafting &amp; Annotation" w="w-[174px] pl-[7px]" /><Tool n="gear" /><Tool n="custom" /></Bar>
    <Bar cls="w-[229px] shrink-0">
      {["zwin", "zdyn", "zscale", "zcenter", "zobj"].map((n) => <Tool key={n} n={n} />)}<VSep />
      <Tool n="zin" /><Tool n="zout" /><VSep /><Tool n="zall" /><Tool n="zext" />
    </Bar>
    <Bar cls="w-[132px] shrink-0"><Tool n="dist" /><Tool n="area" /><Tool n="volume" /><VSep /><Tool n="list" /><Tool n="locate" /></Bar>
    <Bar cls="w-[402px] shrink-0"><Tool n="layerlist" /><Combo label="Current layer" value="0" w="flex-1" pre={<LayerPre />} /><Tool n="layercur" /><Tool n="layerprev" /><Tool n="layerlist" /></Bar>
    <Bar cls="min-w-0 flex-1">
      <Combo label="Color" value="ByLayer" w="w-[150px] shrink-0" pre={<span className="mr-1 ml-[2px] size-[11px] shrink-0 border border-black" />} />
      <span className="mx-[2px] h-full w-[2px] shrink-0 bg-[#c9c4bc]" />
      <LineCombo label="Toolbar linetype" w="w-[160px] shrink-0" line="w-[60px]" />
      <span className="mx-[2px] h-full w-[2px] shrink-0 bg-[#c9c4bc]" />
      <LineCombo label="Toolbar lineweight" w="w-[120px] shrink-0" line="w-[34px]" />
    </Bar>
  </div>
);

const Canvas = () => (
  <div className="ml-1 grid min-w-0 flex-1 grid-cols-[1fr_17px] grid-rows-[1fr_16px] self-stretch border-2 border-t-[#b0ae9c] border-r-[#eef4ec] border-b-[#eef4ec] border-l-[#b0ae9c] bg-[#eef4ec]">
    <div className="relative min-h-[500px] overflow-hidden bg-black">
      <WinButtons cls="absolute top-[9px] right-[10px] gap-2.5" />
      <svg viewBox="0 0 72 72" className="absolute top-[340px] left-[560px] size-[72px]" aria-hidden="true">
        <path d="M0 35.500h31M42 35.500h30M36.500 0v31M36.500 41v31M31.500 30.500h10v10h-10zM34 35.500h5M36.500 33v5" stroke="#fff" fill="none" />
      </svg>
      <svg viewBox="0 0 104 112" className="absolute bottom-2 left-2 h-28 w-[104px] font-['Open_Sans',sans-serif] text-[17px] font-light" aria-label="UCS icon">
        <path d="M7.500 94V30M14 100.500h57" stroke="#fff" fill="none" />
        <path d="M3.500 95.500h10v10h-10z" fill="#000" stroke="#fff" />
        <path d="M8 30l5 14H3zM64.500 95.500l14 5-14 5z" fill="#333" stroke="#fff" />
        <text x="5" y="19" fill="#fff">Y</text>
        <text x="89" y="107" fill="#fff">X</text>
      </svg>
    </div>
    <div className="flex flex-col items-center">
      <Scroll dir="up" />
      <div className="flex flex-1 items-center"><Scroll thumb v /></div>
      <Scroll dir="down" />
    </div>
    <div className="flex items-center">
      <Scroll dir="left" />
      <div className="flex flex-1 justify-end"><Scroll thumb /></div>
      <Scroll dir="right" />
    </div>
    <div className="bg-[#f0e6d8]" />
  </div>
);

const Command = () => (
  <div className="mt-[3px] flex h-[62px] border-b border-[#181818] bg-[#f0f7f0] font-['Liberation_Mono',monospace] text-[13px] text-black">
    <div className="w-[15px] shrink-0 bg-[#a4a6a8] px-[2px] pt-1"><div className="h-1 bg-[repeating-conic-gradient(#2c2c30_0_25%,#a4a6a8_0_50%)] bg-size-[2px_2px]" /></div>
    <div className="flex min-w-0 flex-1 flex-col pl-[2px]">
      <div className="flex h-[43px] border-b border-[#b2ad9e]">
        <div className="flex-1 pt-[2px] leading-4"><p>Command: 'VLIDE</p><p>Command:</p></div>
        <div className="flex flex-col justify-between py-px"><Scroll dir="up" /><Scroll dir="down" /></div>
      </div>
      <div className="flex flex-1 items-center">
        <label htmlFor="cmd" className="pt-1 leading-4">Command:</label>
        <input id="cmd" className="ml-2 min-w-0 flex-1 bg-transparent outline-none" />
        <Scroll dir="left" /><span className="ml-px flex"><Scroll thumb /></span>
        <span className="ml-4 flex"><Scroll dir="right" /></span>
        <span className="ml-[2px] h-full w-[17px] bg-[#f0e6d8]" />
      </div>
    </div>
  </div>
);

const SBtn = ({ n, on }) => (
  <button aria-label={n} className={`flex h-full w-[22px] items-start border-l border-[#55555c] ${on ? "bg-[#b9deea]" : "bg-linear-to-b from-[#c6c8ca] to-[#a2a4a6]"}`}>
    <Icon n={n} />
  </button>
);
const SGroup = ({ children }) => <div className="flex h-full border-r border-[#55555c]">{children}</div>;

const Status = () => (
  <div className="flex h-[21px] items-stretch bg-linear-to-b from-[#7c7c7c] to-[#969696]">
    <output className="w-[172px] pl-3 font-['Liberation_Sans',sans-serif] text-[11px] leading-[23px] whitespace-pre text-[#b8b4a4]">9.0461,   248.7583, 0.0000</output>
    <SGroup>
      {["snap", "grid", "ortho", "polar", "osnap", "otk", "ducs", "dyn", "lwt", "qp"].map((n) => <SBtn key={n} n={n} on={n === "otk" || n === "ducs"} />)}
    </SGroup>
    <div className="flex flex-1 justify-end">
      <SGroup><SBtn n="model" on /><SBtn n="layout" /><SBtn n="lay2" /><SBtn n="quick" /></SGroup>
      <span className="w-[11px]" />
      <SGroup><SBtn n="pan" /><SBtn n="zplain" /><SBtn n="swheel" /><SBtn n="motion" /></SGroup>
      <span className="w-[11px]" />
      <SGroup>
        <button className="flex w-[51px] items-center border-l border-[#55555c] bg-linear-to-b from-[#c6c8ca] to-[#a2a4a6] text-[11px] text-black"><Icon n="tripod" />1:1<Tri /></button>
        <SBtn n="annvis" /><SBtn n="annauto" />
      </SGroup>
      <span className="w-1" />
      <SGroup><SBtn n="gear" /><SBtn n="unlock" /></SGroup>
      <span className="w-[2px]" />
      <SGroup>
        <button aria-label="Status bar menu" className="flex w-3 items-center justify-center border-l border-[#55555c] bg-[#b4b6b8]"><Tri cls="scale-75 text-black" /></button>
        <SBtn n="clean" />
      </SGroup>
    </div>
  </div>
);

const Task = ({ n, on, children }) => (
  <button className={`flex h-[23px] w-[158px] items-center gap-[2px] rounded-[3px] pl-2 ${on ? "bg-[#1e4fb4] shadow-[inset_1px_1px_2px_#0c2c78]" : "bg-linear-to-b from-[#4f94f8] to-[#3a78e6] shadow-[inset_1px_1px_1px_#7ab0ff]"}`}>
    <Icon n={n} /><span className="pt-px">{children}</span>
  </button>
);

const Taskbar = () => (
  <footer className="flex h-[30px] items-center bg-linear-to-b from-[#3f87ee] via-[#245cdc] via-20% to-[#1e4cc8] text-white">
    <button className="flex h-full w-[109px] items-center gap-[5px] rounded-r-[10px] bg-linear-to-b from-[#5db85a] via-[#389438] via-25% to-[#2c7e2c] pl-[9px] font-['Open_Sans',sans-serif] text-[17px] font-bold italic shadow-[inset_-2px_0_3px_#1c5c1c] text-shadow-[1px_1px_2px_#123c12]">
      <svg viewBox="0 0 20 20" className="size-5" aria-hidden="true">
        <path d="M3 4c2-2 4-2 6 0L8 9.500c-2-2-4-1-6 0z" fill="#f0582c" /><path d="M10 4.500c2 2 5 1 8 0l-1.500 6c-2 1-5 1-7-.5z" fill="#8ccc3c" />
        <path d="M1.500 11c2-2 4-1 6 0l-1 5.500c-2-2-4-1-6 0z" fill="#4c90f0" /><path d="M9 11.500c2 2 5 1 7 0l-1 6c-2 1-5 1-7-.5z" fill="#fcd02c" />
      </svg>
      Iniciar
    </button>
    <div className="flex gap-[3px] pl-2.5">
      {["desktop", "firefox", "msn", "wmp", "dark", "htmldoc", "sball", "globe"].map((n) => (
        <button key={n} aria-label={n}><Icon n={n} /></button>
      ))}
      <button aria-label="Document"><Icon n="htmldoc" /></button>
    </div>
    <div className="flex flex-1 gap-[2px] pl-[70px]">
      <Task n="firefox">Antena 1 - Ao vivo - ...</Task>
      <Task n="acad" on>AutoCAD 2009 - [Dra...</Task>
      <Task n="vlisp">Visual LISP for AutoC...</Task>
      <Task n="notepad">Sem título - Bloco de ...</Task>
    </div>
    <div className="flex h-full w-[183px] items-center border-l border-[#0c4ca8] bg-linear-to-b from-[#2cb0f8] via-[#1290e8] via-20% to-[#0f80dc] pl-2">
      {["tray1", "tray2", "tray3", "tray4", "tray5", "tray6", "tray7"].map((n) => <Icon key={n} n={n} cls="size-[18px]" />)}
      <time className="pt-px pl-[7px]">17:30</time>
    </div>
  </footer>
);

export default function App() {
  return (
    <div className="flex min-h-screen flex-col overflow-hidden bg-[#646667] font-['DejaVu_Sans_Condensed','Noto_Sans',sans-serif] text-[11px]">
      <Header />
      <Ribbon />
      <Toolbars />
      <main className="mt-[5px] flex flex-1 items-start">
        <VBar items={DRAW} />
        <span className="w-[3px] shrink-0" />
        <VBar items={MODIFY} />
        <Canvas />
        <div className="mr-[3px] ml-1 flex"><VBar items={SNAPS} /></div>
      </main>
      <Command />
      <Status />
      <Taskbar />
    </div>
  );
}
